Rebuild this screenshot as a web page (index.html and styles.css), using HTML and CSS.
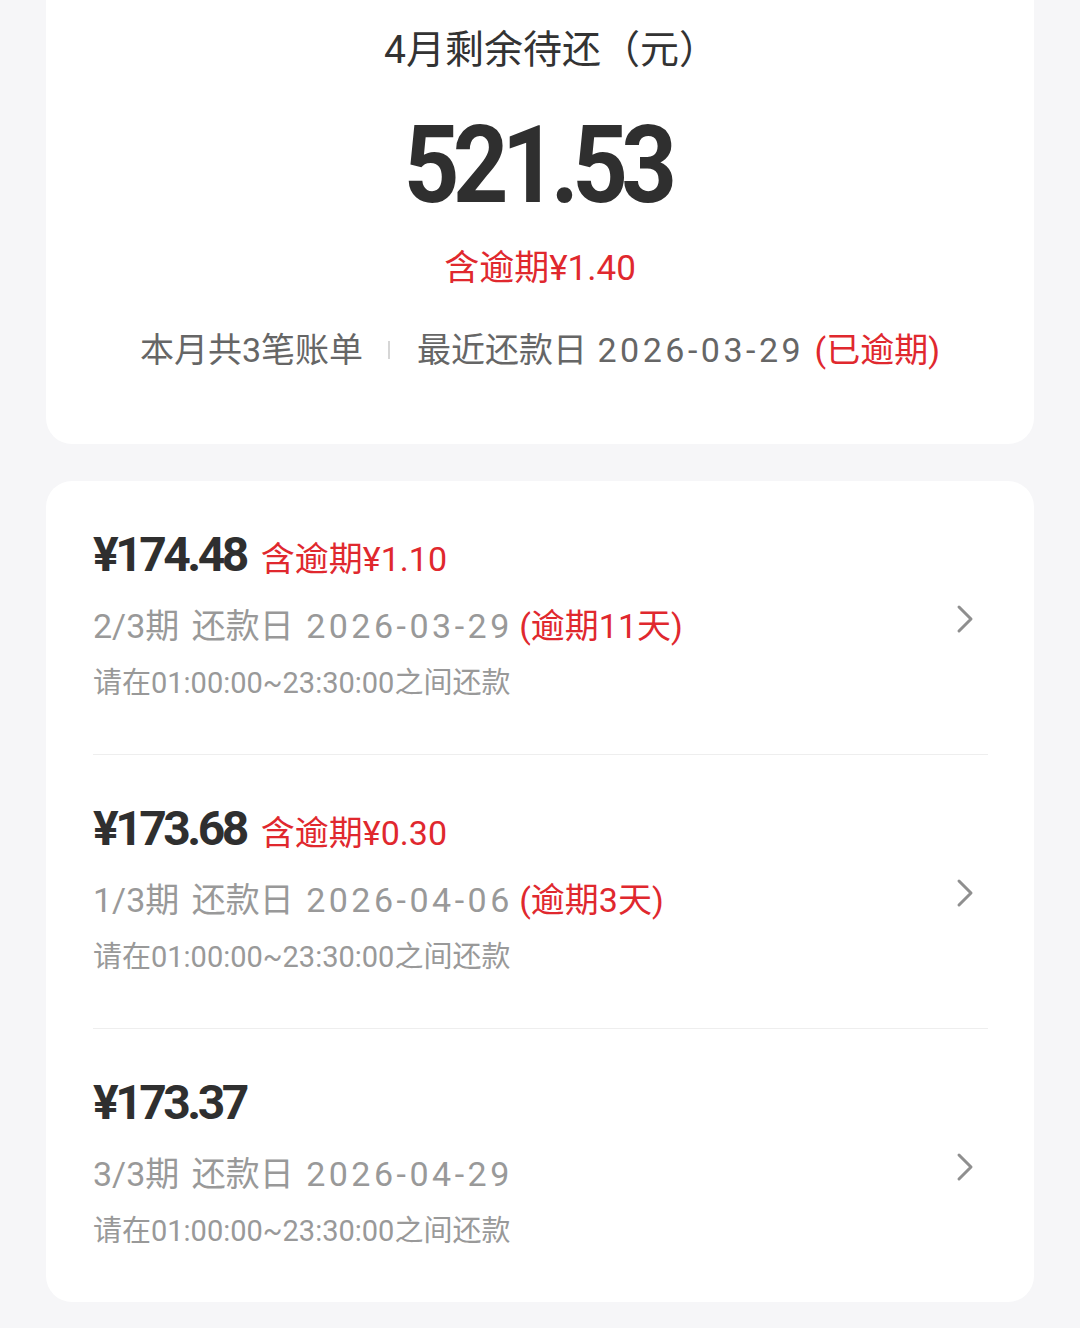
FILE: index.html
```html
<!DOCTYPE html>
<html lang="zh-CN">
<head>
<meta charset="utf-8">
<link rel="stylesheet" href="styles.css">
</head>
<body>
<div class="page">
  <section class="summary">
    <div class="summary-title">4月剩余待还（元）</div>
    <div class="summary-amount"><span class="big">521.53</span></div>
    <div class="summary-overdue">含逾期¥1.40</div>
    <div class="summary-info">
      <span>本月共3笔账单</span>
      <span class="sep"></span>
      <span>最近还款日 <span class="date">2026-03-29</span> <span class="red">(已逾期)</span></span>
    </div>
  </section>

  <section class="bills">
    <div class="bill">
      <div class="bill-main">
        <div class="bill-amount"><span class="amt">¥174.48</span><span class="red amt-note">含逾期¥1.10</span></div>
        <div class="bill-due">2/3期 还款日 <span class="date">2026-03-29</span> <span class="red">(逾期11天)</span></div>
        <div class="bill-hint">请在01:00:00~23:30:00之间还款</div>
      </div>
      <svg class="chev" viewBox="0 0 18 30" width="18" height="30"><path d="M3 3 L15 15 L3 27" fill="none" stroke="#8f8f8f" stroke-width="3" stroke-linecap="round" stroke-linejoin="round"/></svg>
    </div>
    <div class="bill">
      <div class="bill-main">
        <div class="bill-amount"><span class="amt">¥173.68</span><span class="red amt-note">含逾期¥0.30</span></div>
        <div class="bill-due">1/3期 还款日 <span class="date">2026-04-06</span> <span class="red">(逾期3天)</span></div>
        <div class="bill-hint">请在01:00:00~23:30:00之间还款</div>
      </div>
      <svg class="chev" viewBox="0 0 18 30" width="18" height="30"><path d="M3 3 L15 15 L3 27" fill="none" stroke="#8f8f8f" stroke-width="3" stroke-linecap="round" stroke-linejoin="round"/></svg>
    </div>
    <div class="bill">
      <div class="bill-main">
        <div class="bill-amount"><span class="amt">¥173.37</span></div>
        <div class="bill-due">3/3期 还款日 <span class="date">2026-04-29</span></div>
        <div class="bill-hint">请在01:00:00~23:30:00之间还款</div>
      </div>
      <svg class="chev" viewBox="0 0 18 30" width="18" height="30"><path d="M3 3 L15 15 L3 27" fill="none" stroke="#8f8f8f" stroke-width="3" stroke-linecap="round" stroke-linejoin="round"/></svg>
    </div>
  </section>
</div>
</body>
</html>
```

FILE: styles.css
```css
html, body {
  margin: 0;
  padding: 0;
  background: #f6f6f8;
}
body {
  font-family: Roboto, "Noto Sans CJK SC", sans-serif;
  color: #333;
}
.page {
  padding: 0 46px 26px;
}
.summary {
  background: #fff;
  border-radius: 0 0 26px 26px;
  text-align: center;
  padding: 22px 0 70px;
}
.summary-title {
  font-size: 39px;
  line-height: 56px;
  color: #333;
  padding-left: 22px;
}
.summary-amount {
  margin-top: 27px;
  line-height: 120px;
  height: 120px;
}
.big {
  display: inline-block;
  font-size: 108px;
  font-weight: 700;
  letter-spacing: -7.5px;
  margin-right: 6.5px;
  color: #2f2f2f;
  transform: scaleX(0.9);
}
.summary-overdue {
  margin-top: 20px;
  font-size: 35px;
  line-height: 48px;
  color: #e0282e;
}
.summary-info {
  margin-top: 33px;
  font-size: 34px;
  line-height: 48px;
  color: #666;
  display: flex;
  justify-content: center;
  align-items: center;
  word-spacing: 2px;
}
.sep {
  display: inline-block;
  width: 2px;
  height: 18px;
  background: #d6d6d6;
  margin: 0 27px 0 25px;
}
.date {
  letter-spacing: 3.5px;
}
.red {
  color: #e0282e;
}
.bills {
  margin-top: 37px;
  background: #fff;
  border-radius: 26px;
  padding: 0 46px 0 47px;
}
.bill {
  display: flex;
  align-items: center;
  padding: 44px 0 51px;
  border-bottom: 1px solid #eeeeee;
}
.bill:last-child {
  border-bottom: none;
}
.bill-main {
  flex: 1;
}
.bill-amount {
  display: flex;
  align-items: baseline;
  line-height: 60px;
  height: 60px;
}
.amt {
  font-size: 48px;
  font-weight: 700;
  letter-spacing: -3.5px;
  color: #2f2f2f;
}
.amt-note {
  margin-left: 15px;
  font-size: 34px;
}
.bill-due {
  margin-top: 17px;
  font-size: 34px;
  line-height: 48px;
  color: #999;
  word-spacing: 4px;
}
.bill-due .date {
  margin-right: -6px;
}
.bill-hint {
  margin-top: 13px;
  font-size: 29px;
  line-height: 40px;
  color: #999;
}
.chev {
  flex: none;
  margin: 10px 14px 0 0;
}
```
